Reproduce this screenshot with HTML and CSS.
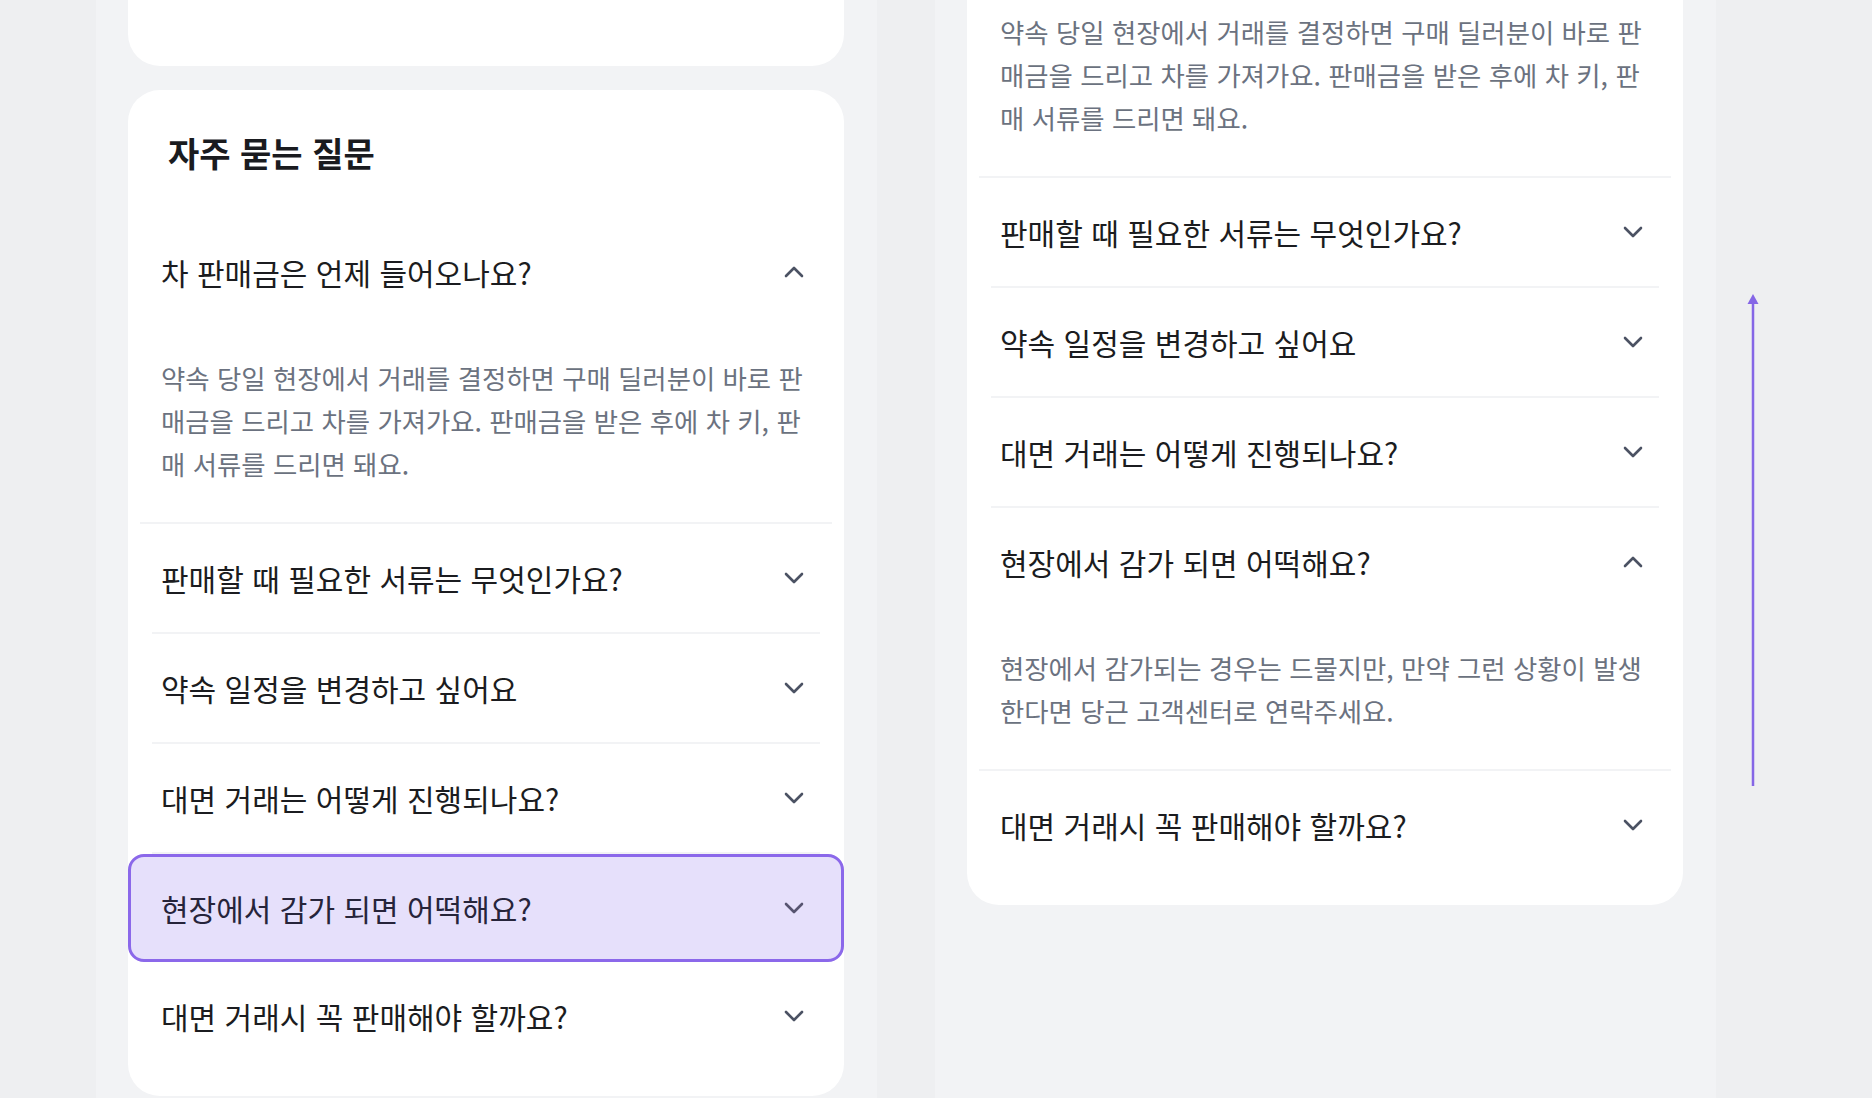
FILE: index.html
```html
<!DOCTYPE html>
<html lang="ko">
<head>
  <meta charset="UTF-8" />
  <meta name="viewport" content="width=device-width, initial-scale=1.0"/>
  <title>자주 묻는 질문</title>
  <link rel="stylesheet" href="styles.css">
</head>
<body>
  <div class="stage">
    <section class="phone">
      <div class="scroll scroll-left">
        <div class="card card-prev"></div>
        <div class="card faq">
          <h2 class="faq-title">자주 묻는 질문</h2>
          <ul class="faq-list">
            <li class="faq-item open">
              <button class="faq-q">
                <span>차 판매금은 언제 들어오나요?</span>
                <svg class="chev" width="20" height="12" viewBox="0 0 20 12"><path d="M2 10l8-8 8 8"/></svg>
              </button>
              <div class="faq-a">약속 당일 현장에서 거래를 결정하면 구매 딜러분이 바로 판매금을 드리고 차를 가져가요. 판매금을 받은 후에 차 키, 판매 서류를 드리면 돼요.</div>
            </li>
            <li class="faq-item">
              <button class="faq-q">
                <span>판매할 때 필요한 서류는 무엇인가요?</span>
                <svg class="chev" width="20" height="12" viewBox="0 0 20 12"><path d="M2 2l8 8 8-8"/></svg>
              </button>
            </li>
            <li class="faq-item">
              <button class="faq-q">
                <span>약속 일정을 변경하고 싶어요</span>
                <svg class="chev" width="20" height="12" viewBox="0 0 20 12"><path d="M2 2l8 8 8-8"/></svg>
              </button>
            </li>
            <li class="faq-item">
              <button class="faq-q">
                <span>대면 거래는 어떻게 진행되나요?</span>
                <svg class="chev" width="20" height="12" viewBox="0 0 20 12"><path d="M2 2l8 8 8-8"/></svg>
              </button>
            </li>
            <li class="faq-item focus">
              <button class="faq-q">
                <span>현장에서 감가 되면 어떡해요?</span>
                <svg class="chev" width="20" height="12" viewBox="0 0 20 12"><path d="M2 2l8 8 8-8"/></svg>
              </button>
            </li>
            <li class="faq-item">
              <button class="faq-q">
                <span>대면 거래시 꼭 판매해야 할까요?</span>
                <svg class="chev" width="20" height="12" viewBox="0 0 20 12"><path d="M2 2l8 8 8-8"/></svg>
              </button>
            </li>
          </ul>
        </div>
      </div>
    </section>

    <section class="phone">
      <div class="scroll scroll-right">
        <div class="card faq">
          <h2 class="faq-title">자주 묻는 질문</h2>
          <ul class="faq-list">
            <li class="faq-item open">
              <button class="faq-q">
                <span>차 판매금은 언제 들어오나요?</span>
                <svg class="chev" width="20" height="12" viewBox="0 0 20 12"><path d="M2 10l8-8 8 8"/></svg>
              </button>
              <div class="faq-a">약속 당일 현장에서 거래를 결정하면 구매 딜러분이 바로 판매금을 드리고 차를 가져가요. 판매금을 받은 후에 차 키, 판매 서류를 드리면 돼요.</div>
            </li>
            <li class="faq-item">
              <button class="faq-q">
                <span>판매할 때 필요한 서류는 무엇인가요?</span>
                <svg class="chev" width="20" height="12" viewBox="0 0 20 12"><path d="M2 2l8 8 8-8"/></svg>
              </button>
            </li>
            <li class="faq-item">
              <button class="faq-q">
                <span>약속 일정을 변경하고 싶어요</span>
                <svg class="chev" width="20" height="12" viewBox="0 0 20 12"><path d="M2 2l8 8 8-8"/></svg>
              </button>
            </li>
            <li class="faq-item">
              <button class="faq-q">
                <span>대면 거래는 어떻게 진행되나요?</span>
                <svg class="chev" width="20" height="12" viewBox="0 0 20 12"><path d="M2 2l8 8 8-8"/></svg>
              </button>
            </li>
            <li class="faq-item open">
              <button class="faq-q">
                <span>현장에서 감가 되면 어떡해요?</span>
                <svg class="chev" width="20" height="12" viewBox="0 0 20 12"><path d="M2 10l8-8 8 8"/></svg>
              </button>
              <div class="faq-a">현장에서 감가되는 경우는 드물지만, 만약 그런 상황이 발생한다면 당근 고객센터로 연락주세요.</div>
            </li>
            <li class="faq-item">
              <button class="faq-q">
                <span>대면 거래시 꼭 판매해야 할까요?</span>
                <svg class="chev" width="20" height="12" viewBox="0 0 20 12"><path d="M2 2l8 8 8-8"/></svg>
              </button>
            </li>
          </ul>
        </div>
      </div>
    </section>

    <div class="scroll-hint">
      <svg width="14" height="494" viewBox="0 0 14 494"><path class="tip" d="M7 0L12.5 10H1.5z"/><path class="shaft" d="M7 8V492"/></svg>
    </div>
  </div>
</body>
</html>
```

FILE: styles.css
```css
body {
  margin: 0;
  background-color: #eeeff1;
  font-family: "Noto Sans CJK KR", "Noto Sans", sans-serif;
  color: #1e1f23;
  height: 1098px;
  overflow: hidden;
}
.stage {
  position: relative;
  display: flex;
  gap: 58px;
  padding-left: 96px;
  height: 1098px;
}
.phone {
  width: 781px;
  height: 1098px;
  box-sizing: border-box;
  padding: 0 33px 0 32px;
  background-color: #f2f3f5;
  overflow: hidden;
}
.scroll-right {
  margin-top: -256px;
}
.card {
  background: #fff;
  border-radius: 32px;
}
.card-prev {
  height: 200px;
  margin-top: -134px;
  margin-bottom: 24px;
}
.faq {
  padding: 40px 0 26px;
}
.faq-title {
  margin: 0 0 42px 40px;
  font-size: 34px;
  line-height: 46px;
  font-weight: 700;
  color: #1a1b1f;
}
.faq-list {
  list-style: none;
  margin: 0;
  padding: 0;
}
.faq-item {
  margin: 0 24px;
  border-bottom: 2px solid #f2f3f5;
}
.faq-item:last-child {
  border-bottom: none;
}
.faq-item.open {
  margin: 0 12px;
}
.faq-item.focus {
  margin: 0;
  border: 3px solid #8b68ea;
  border-radius: 16px;
  background-color: #e6e0fb;
}
.faq-q {
  display: flex;
  align-items: center;
  justify-content: space-between;
  width: 100%;
  height: 108px;
  padding: 0 16px 0 9px;
  border: none;
  background: none;
  font-family: inherit;
  font-size: 30px;
  color: #1b1c20;
  text-align: left;
  cursor: pointer;
}
.open .faq-q {
  padding: 0 28px 0 21px;
}
.focus .faq-q {
  height: 102px;
  padding: 0 37px 0 30px;
  color: #26243a;
}
.chev {
  flex-shrink: 0;
}
.chev path {
  fill: none;
  stroke: #4b5263;
  stroke-width: 2.6;
  stroke-linecap: round;
  stroke-linejoin: round;
}
.focus .chev path {
  stroke: #575470;
}
.faq-a {
  padding: 30px 19px 37px 21px;
  font-size: 26.4px;
  line-height: 43px;
  color: #6b7280;
}
.scroll-hint {
  position: absolute;
  left: 1746px;
  top: 294px;
}
.scroll-hint svg {
  display: block;
}
.tip {
  fill: #8566e6;
}
.shaft {
  stroke: #8566e6;
  stroke-width: 2.5;
}
```
